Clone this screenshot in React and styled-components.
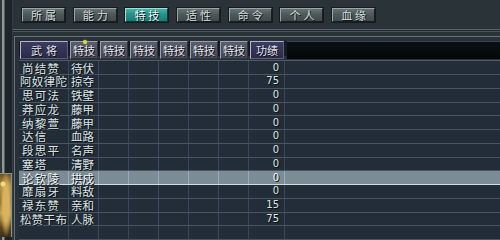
import React from 'react';
import styled, { createGlobalStyle } from 'styled-components';

const Global = createGlobalStyle`
  html, body { margin: 0; padding: 0; background: #2a3337; }
  body { width: 500px; height: 240px; overflow: hidden; font-family: "Noto Sans CJK SC", "Noto Sans", sans-serif; }
`;

const COLS = '50px repeat(6, 30px) 36px 1fr';

const Screen = styled.div`
  width: 500px;
  height: 240px;
  display: flex;
  background: #2a3337;
  overflow: hidden;
`;

const LeftRail = styled.div`
  width: 13px;
  flex: none;
  display: flex;
  flex-direction: column;
  background: linear-gradient(90deg, #30373a 0 2px, #8e9698 2px 4px, #586063 4px 5px, #1e2528 5px 12px, #343e42 12px 13px);
`;

const Portrait = styled.div`
  margin-top: auto;
  margin-bottom: 3px;
  height: 63px;
  width: 11px;
  border-top: 1px solid #8b9294;
  border-right: 1px solid #8b9294;
  background:
    radial-gradient(circle at 3px 10px, #f2d98a 0 2px, transparent 3px),
    radial-gradient(ellipse at 6px 30px, #d8b45e 0 3px, transparent 6px),
    linear-gradient(180deg, #6b5426 0%, #b8913f 20%, #8d6c2e 45%, #c4a052 62%, #5e4720 85%, #3a2c16 100%);
`;

const Main = styled.div`
  flex: 1;
  min-width: 0;
  display: flex;
  flex-direction: column;
`;

const TabBar = styled.div`
  display: flex;
  gap: 8.7px;
  padding: 8px 0 0 9px;
`;

const Tab = styled.div`
  width: 43px;
  height: 14px;
  box-sizing: border-box;
  display: flex;
  align-items: center;
  justify-content: center;
  font-size: 11px;
  letter-spacing: 3px;
  text-indent: 3px;
  color: ${p => (p.$active ? '#f2fbfa' : '#d4dcde')};
  text-shadow: 1px 1px 0 #101416;
  background: ${p =>
    p.$active
      ? 'linear-gradient(180deg, #45b2a8 0%, #25918a 45%, #1d7b75 100%)'
      : 'linear-gradient(180deg, #66716f 0%, #4d595b 45%, #3f4a4d 100%)'};
  border: 1px solid;
  border-color: ${p => (p.$active ? '#9fe0d8 #0f3a37 #0f3a37 #9fe0d8' : '#9aa5a6 #1a2022 #1a2022 #9aa5a6')};
  box-shadow: 0 0 0 1px #161b1d;
`;

const Divider = styled.div`
  margin-top: 7px;
  height: 5px;
  box-sizing: border-box;
  border-top: 1px solid #56636a;
  border-bottom: 1px solid #4b575d;
  background: #232b2f;
`;

const Panel = styled.div`
  flex: 1;
  margin: 4px 0 0 1px;
  border-top: 1px solid #66727a;
  border-left: 1px solid #66727a;
  padding: 4px 0 0 4px;
  background: #273137;
  display: flex;
  flex-direction: column;
`;

const HeaderRow = styled.div`
  display: grid;
  grid-template-columns: ${COLS};
  height: 15px;
  background: #151c20;
`;

const HeadBtn = styled.div`
  position: relative;
  margin: 0 1px;
  box-sizing: border-box;
  display: flex;
  align-items: center;
  justify-content: center;
  font-size: 11px;
  white-space: nowrap;
  letter-spacing: ${p => (p.$wide ? '4px' : '0')};
  text-indent: ${p => (p.$wide ? '4px' : '0')};
  color: #e4e6ee;
  text-shadow: 1px 1px 0 #0c0e14;
  background: ${p =>
    p.$tone === 'purple'
      ? 'linear-gradient(180deg, #3c3c60 0%, #2b2b48 100%)'
      : 'linear-gradient(180deg, #5a5e6c 0%, #454956 100%)'};
  border: 1px solid;
  border-color: ${p => (p.$tone === 'purple' ? '#b4b4d2 #5c5c7e #5c5c7e #b4b4d2' : '#9ca0ac #30333c #30333c #9ca0ac')};
`;

const Marker = styled.span`
  position: absolute;
  left: 12px;
  top: -2px;
  width: 4px;
  height: 4px;
  border-radius: 50%;
  background: #e0dc48;
  box-shadow: 0 0 2px #a8b030;
`;

const BlackFill = styled.div`
  margin-left: 2px;
  background: linear-gradient(180deg, #0a1014 0%, #03070a 100%);
  border-top: 1px solid #39434a;
`;

const Body = styled.div`
  margin-top: 4px;
  border-top: 1px solid #4d5a64;
  background: #232d37;
  flex: 1;
`;

const Row = styled.div`
  display: grid;
  grid-template-columns: ${COLS};
  height: 13.75px;
  box-sizing: border-box;
  border-bottom: 1px solid ${p => (p.$hl ? '#d2dde2' : '#4a5763')};
  background: ${p => (p.$hl ? '#7c8c97' : 'transparent')};
`;

const Cell = styled.div`
  box-sizing: border-box;
  border-right: 1px solid ${p => (p.$hl ? '#9aa9b2' : '#3b4853')};
  display: flex;
  align-items: center;
  white-space: nowrap;
  min-width: 0;
  line-height: 12px;
  color: ${p => (p.$hl ? '#f4f8fa' : '#dde3e6')};
  text-shadow: 1px 1px 0 #0d1114;
`;

const NameCell = styled(Cell)`
  font-size: ${p => (p.$long ? '11.5px' : '11.5px')};
  letter-spacing: ${p => (p.$long ? '0.3px' : '1.3px')};
  padding-left: ${p => (p.$long ? '1px' : '3px')};
`;

const SkillCell = styled(Cell)`
  font-size: 11.5px;
  letter-spacing: 0;
  padding-left: 2px;
`;

const NumCell = styled(Cell)`
  justify-content: flex-end;
  padding-right: 5px;
  font-family: "DejaVu Sans", sans-serif;
  font-size: 10px;
`;

const EmptyCell = styled(Cell)``;

const FillCell = styled.div``;

const tabs = ['所属', '能力', '特技', '适性', '命令', '个人', '血缘'];

const rows = [
  ['尚结赞', '待伏', 0],
  ['阿奴律陀', '掠夺', 75],
  ['思可法', '铁壁', 0],
  ['莽应龙', '藤甲', 0],
  ['纳黎萱', '藤甲', 0],
  ['达信', '血路', 0],
  ['段思平', '名声', 0],
  ['塞塔', '清野', 0],
  ['论钦陵', '拱戍', 0],
  ['靡扇牙', '料敌', 0],
  ['禄东赞', '亲和', 15],
  ['松赞干布', '人脉', 75],
];

export default function App() {
  return (
    <>
      <Global />
      <Screen>
        <LeftRail>
          <Portrait />
        </LeftRail>
        <Main>
          <TabBar>
            {tabs.map(t => (
              <Tab key={t} $active={t === '特技'}>{t}</Tab>
            ))}
          </TabBar>
          <Divider />
          <Panel>
            <HeaderRow>
              <HeadBtn $tone="purple" $wide>武将</HeadBtn>
              {[0, 1, 2, 3, 4, 5].map(i => (
                <HeadBtn key={i}>
                  {i === 0 && <Marker />}
                  特技
                </HeadBtn>
              ))}
              <HeadBtn $tone="purple">功绩</HeadBtn>
              <BlackFill />
            </HeaderRow>
            <Body>
              {rows.map(([name, skill, merit], i) => {
                const hl = i === 8;
                return (
                  <Row key={name} $hl={hl}>
                    <NameCell $hl={hl} $long={name.length > 3}>{name}</NameCell>
                    <SkillCell $hl={hl}>{skill}</SkillCell>
                    {[0, 1, 2, 3, 4].map(k => (
                      <EmptyCell key={k} $hl={hl} />
                    ))}
                    <NumCell $hl={hl}>{merit}</NumCell>
                    <FillCell />
                  </Row>
                );
              })}
              <Row>
                <EmptyCell />
                <EmptyCell />
                {[0, 1, 2, 3, 4].map(k => (
                  <EmptyCell key={k} />
                ))}
                <EmptyCell />
                <FillCell />
              </Row>
            </Body>
          </Panel>
        </Main>
      </Screen>
    </>
  );
}
